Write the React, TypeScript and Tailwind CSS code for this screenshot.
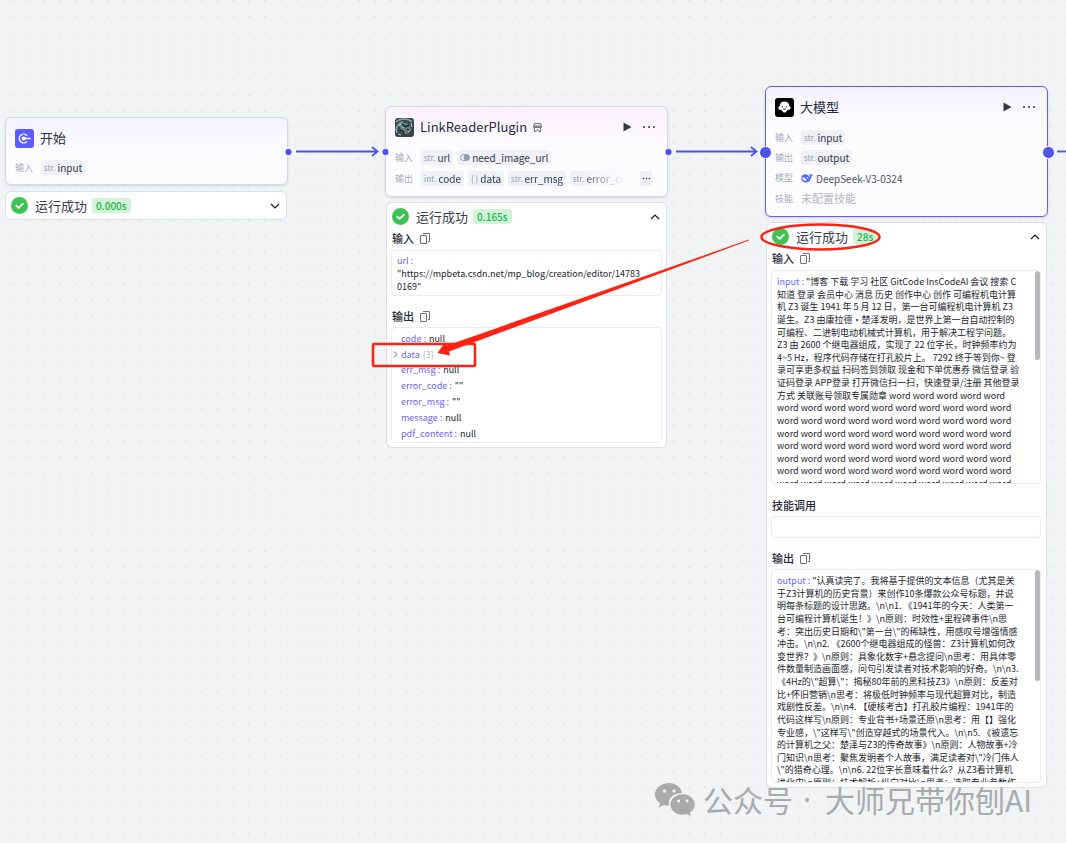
import React from "react";

const FONT = "font-['Noto_Sans_CJK_SC',sans-serif]";

const INPUT_LINES = [
  "\"博客 下载 学习 社区 GitCode InsCodeAI 会议 搜索 C",
  "知道 登录 会员中心 消息 历史 创作中心 创作 可编程机电计算",
  "机 Z3 诞生 1941 年 5 月 12 日，第一台可编程机电计算机 Z3",
  "诞生。Z3 由康拉德・楚泽发明，是世界上第一台自动控制的",
  "可编程、二进制电动机械式计算机，用于解决工程学问题。",
  "Z3 由 2600 个继电器组成，实现了 22 位字长，时钟频率约为",
  "4~5 Hz，程序代码存储在打孔胶片上。 7292 终于等到你~ 登",
  "录可享更多权益 扫码签到领取 现金和下单优惠券 微信登录 验",
  "证码登录 APP登录 打开微信扫一扫，快速登录/注册 其他登录",
  "方式 关联账号领取专属勋章 word word word word word",
  ...Array.from({ length: 7 }, () => Array(10).fill("word").join(" ")),
];

const OUTPUT_LINES = [
  "\"认真读完了。我将基于提供的文本信息（尤其是关",
  "于Z3计算机的历史背景）来创作10条爆款公众号标题，并说",
  "明每条标题的设计思路。\\n\\n1. 《1941年的今天：人类第一",
  "台可编程计算机诞生！》\\n原则：时效性+里程碑事件\\n思",
  "考：突出历史日期和\\\"第一台\\\"的稀缺性，用感叹号增强情感",
  "冲击。\\n\\n2. 《2600个继电器组成的怪兽：Z3计算机如何改",
  "变世界？》\\n原则：具象化数字+悬念提问\\n思考：用具体零",
  "件数量制造画面感，问句引发读者对技术影响的好奇。\\n\\n3.",
  "《4Hz的\\\"超算\\\"：揭秘80年前的黑科技Z3》\\n原则：反差对",
  "比+怀旧营销\\n思考：将极低时钟频率与现代超算对比，制造",
  "戏剧性反差。\\n\\n4. 【硬核考古】打孔胶片编程：1941年的",
  "代码这样写\\n原则：专业背书+场景还原\\n思考：用【】强化",
  "专业感，\\\"这样写\\\"创造穿越式的场景代入。\\n\\n5. 《被遗忘",
  "的计算机之父：楚泽与Z3的传奇故事》\\n原则：人物故事+冷",
  "门知识\\n思考：聚焦发明者个人故事，满足读者对\\\"冷门伟人",
  "\\\"的猎奇心理。\\n\\n6. 22位字长意味着什么？从Z3看计算机",
  "进化史\\n原则：技术解析+纵向对比\\n思考：选取专业参数作",
];

const PLUGIN_OUTPUT: { name: string; value: string; count?: boolean }[] = [
  { name: "code", value: "null" },
  { name: "data", value: "{3}", count: true },
  { name: "err_msg", value: "null" },
  { name: "error_code", value: "\"\"" },
  { name: "error_msg", value: "\"\"" },
  { name: "message", value: "null" },
  { name: "pdf_content", value: "null" },
];

function Chip({ type, name }: { type: React.ReactNode; name: string }) {
  return (
    <span className="flex h-[15px] shrink-0 items-center gap-0.5 rounded-[3px] bg-[#f0f0f8] px-[3px] text-[10px] text-[#33374a]">
      <span className="text-[8px] text-[#9498b0]">{type}</span>
      {name}
    </span>
  );
}

function Row({ label, children }: { label: string; children: React.ReactNode }) {
  return (
    <div className="flex items-center gap-[7px]">
      <span className="w-[19px] shrink-0 whitespace-nowrap text-[9px] text-[#a9acc2]">{label}</span>
      {children}
    </div>
  );
}

function CopyButton() {
  return (
    <button type="button" aria-label="复制" className="text-[#6b6f7e]">
      <svg width="10" height="11" viewBox="0 0 10 11" fill="none" stroke="currentColor">
        <rect x="0.5" y="2.5" width="6" height="8" rx="0.5" />
        <path d="M3 0.5h6.5v8H8" />
      </svg>
    </button>
  );
}

function SectionTitle({ title, copy = true }: { title: string; copy?: boolean }) {
  return (
    <div className="flex h-4 items-center gap-1.5 pl-px">
      <h3 className="text-[11px] font-medium text-[#22263a]">{title}</h3>
      {copy && <CopyButton />}
    </div>
  );
}

function RunStatus({ time, open }: { time: string; open: boolean }) {
  return (
    <div className="flex h-[27px] items-center pl-[5px] pr-1.5">
      <svg width="17" height="17" viewBox="0 0 17 17" fill="none">
        <circle cx="8.5" cy="8.5" r="8.5" fill="#3ec254" />
        <path d="M5.2 8.6l2.4 2.3 4.3-4.3" stroke="#fff" strokeWidth="1.7" strokeLinecap="round" strokeLinejoin="round" />
      </svg>
      <span className="ml-[7px] text-[13px] text-[#383c4f]">运行成功</span>
      <span className="ml-[5px] flex h-[15px] items-center rounded-[3px] bg-[#d2f3d9] px-1 text-[10px] font-medium text-[#1db446]">
        {time}
      </span>
      <button type="button" aria-label={open ? "收起" : "展开"} className="ml-auto text-[#15171f]">
        <svg width="10" height="8" viewBox="0 0 10 8" fill="none" stroke="currentColor" strokeWidth="1.2">
          <path d={open ? "M1 6l4-4 4 4" : "M1 2l4 4 4-4"} />
        </svg>
      </button>
    </div>
  );
}

function NodeActions() {
  return (
    <div className="ml-auto flex items-center gap-2.5 pr-0.5">
      <button type="button" aria-label="运行" className="text-[#33374a]">
        <svg width="9" height="10" viewBox="0 0 9 10" fill="currentColor">
          <path d="M0.5 0.5L8.5 5L0.5 9.5Z" />
        </svg>
      </button>
      <button type="button" aria-label="更多" className="text-[#33374a]">
        <svg width="14" height="4" viewBox="0 0 14 4" fill="currentColor">
          <circle cx="2" cy="2" r="1" />
          <circle cx="7" cy="2" r="1" />
          <circle cx="12" cy="2" r="1" />
        </svg>
      </button>
    </div>
  );
}

function LogView({ name, lines }: { name: string; lines: string[] }) {
  return (
    <div className="flex h-[214px] justify-between overflow-hidden rounded border border-[#ebebf3] pl-[5px]">
      <div className="flex h-[219px] flex-col justify-between pt-[5px] text-[9px] text-[#22252f]">
        {lines.map((line, i) => (
          <p key={i} className="h-3 whitespace-pre leading-3">
            {i === 0 && <span className="text-[#6b63ff]">{name} : </span>}
            {line}
          </p>
        ))}
      </div>
      <div
        className={`w-[5px] shrink-0 rounded-full bg-[#b8b8bb] ${name === "input" ? "h-[89px]" : "h-[111px]"}`}
      />
    </div>
  );
}

function StartNode() {
  return (
    <article className="absolute left-[5px] top-[117px] w-[283px]">
      <div className="h-[68px] rounded-md border border-[#d5d7e6] bg-gradient-to-b from-[#f3f2ff] to-[#fcfcff] to-50% px-[9px] pt-[10px] shadow-sm">
        <header className="flex h-5 items-center gap-1.5">
          <svg width="19" height="19" viewBox="0 0 19 19" fill="none">
            <rect width="19" height="19" rx="3" fill="#5b5cff" />
            <path d="M11.6 6.2A4.4 4.4 0 1 0 11.6 12.8" stroke="#fff" strokeWidth="1.4" strokeLinecap="round" />
            <circle cx="8.6" cy="9.5" r="2" fill="#fff" />
            <path d="M8.6 9.5H15" stroke="#fff" strokeWidth="1.5" strokeLinecap="round" />
          </svg>
          <h2 className="text-[13px] text-[#262a3c]">开始</h2>
        </header>
        <div className="mt-3">
          <Row label="输入">
            <Chip type="str." name="input" />
          </Row>
        </div>
      </div>
      <div className="mr-px mt-1.5 rounded-md border border-[#dcdee8] bg-white">
        <RunStatus time="0.000s" open={false} />
      </div>
    </article>
  );
}

function PluginNode() {
  return (
    <article className="absolute left-[385px] top-[106px] w-[283px]">
      <div className="h-[91px] rounded-md border border-[#d5d7e6] bg-gradient-to-b from-[#fbf0ff] to-[#fcfcff] to-45% px-[9px] pt-[10px] shadow-sm">
        <header className="flex h-5 items-center gap-1.5">
          <svg width="19" height="19" viewBox="0 0 19 19" fill="none">
            <rect width="19" height="19" rx="3" fill="#34464f" />
            <path d="M1 4C5 0 13 0 17 4M2 15C0 10 3 5 8 4" stroke="#8ea3a6" strokeWidth="1.6" />
            <path d="M5 7c3-3 8-3 10 1s0 8-4 8-7-4-6-9z" fill="#5d8580" />
            <path d="M7 6l3 3 4-2M5 12l3 1 1 3M12 11l3 2" stroke="#14222c" strokeWidth="1.4" />
            <path d="M10 10l2 3-2 3M14 8l1 3" stroke="#b75348" strokeWidth="1" />
            <path d="M4 8l2-2M7 9l2 1M13 14l2-2M3 16l3 1M16 5l1 4" stroke="#c8dad4" strokeWidth="1" />
          </svg>
          <h2 className="text-[13px] text-[#262a3c]">LinkReaderPlugin</h2>
          <svg width="9" height="9" viewBox="0 0 9 9" fill="none" stroke="#555a6b" strokeWidth="0.9">
            <path d="M1.5 .6h6L8.4 3.2v1.2H.6V3.2zM.6 3h7.8M3.2 3v1.4M5.8 3v1.4M1.4 4.4v4h1.8l1.3-2 1.3 2h1.8v-4" />
          </svg>
          <NodeActions />
        </header>
        <div className="mt-[13px] flex flex-col gap-1.5">
          <Row label="输入">
            <div className="flex gap-1">
              <Chip type="str." name="url" />
              <Chip
                type={
                  <svg width="10" height="7" viewBox="0 0 10 7" fill="none" stroke="#9297b2">
                    <rect x="0.5" y="0.5" width="9" height="6" rx="3" />
                    <circle cx="6.5" cy="3.5" r="2.5" fill="#9297b2" />
                  </svg>
                }
                name="need_image_url"
              />
            </div>
          </Row>
          <Row label="输出">
            <div className="flex w-[208px] gap-1 overflow-hidden [mask-image:linear-gradient(to_right,black_76%,transparent_98%)]">
              <Chip type="int." name="code" />
              <Chip type="{ }" name="data" />
              <Chip type="str." name="err_msg" />
              <Chip type="str." name="error_code" />
            </div>
            <button
              type="button"
              aria-label="更多输出"
              className="ml-1 flex h-[15px] w-3 items-center justify-center rounded-[3px] bg-[#eeeef7]"
            >
              <svg width="9" height="3" viewBox="0 0 9 3" fill="#33374a">
                <circle cx="1.5" cy="1.5" r="0.8" />
                <circle cx="4.5" cy="1.5" r="0.8" />
                <circle cx="7.5" cy="1.5" r="0.8" />
              </svg>
            </button>
          </Row>
        </div>
      </div>
      <div className="mx-px mt-[5px] rounded-md border border-[#dcdee8] bg-white pb-1">
        <RunStatus time="0.165s" open />
        <div className="px-1">
          <SectionTitle title="输入" />
          <div className="mt-1 h-[46px] rounded border border-[#ebebf3] px-[5px] pt-[3px] text-[9px] leading-[13px] text-[#22252f]">
            <p className="text-[#6b63ff]">url :</p>
            <p className="whitespace-nowrap">
              "https://mpbeta.csdn.net/mp_blog/creation/editor/14783
              <br />
              0169"
            </p>
          </div>
          <div className="mt-3">
            <SectionTitle title="输出" />
          </div>
          <ul className="mt-[3px] flex h-[116px] flex-col justify-between rounded border border-[#ebebf3] pb-px pl-px pt-[3px] text-[9px] text-[#22252f]">
            {PLUGIN_OUTPUT.map(({ name, value, count }) => (
              <li key={name} className="flex h-[15px] items-center">
                <span className="w-2 shrink-0">
                  {count && (
                    <svg width="5" height="7" viewBox="0 0 5 7" fill="none" stroke="#555a6b">
                      <path d="M1 .5l3 3-3 3" />
                    </svg>
                  )}
                </span>
                <span className="text-[#6b63ff]">{count ? name : `${name} :`}</span>
                <span className={count ? "ml-[3px] text-[#b5b7c4]" : "ml-[3px]"}>{value}</span>
              </li>
            ))}
          </ul>
        </div>
      </div>
    </article>
  );
}

function ModelNode() {
  return (
    <article className="absolute left-[765px] top-[86px] w-[283px]">
      <div className="h-[131px] rounded-md border border-[#635bff] bg-gradient-to-b from-[#f3f2ff] to-[#fcfcff] to-30% px-[9px] pt-[10px] shadow-sm">
        <header className="flex h-5 items-center gap-1.5">
          <svg width="19" height="19" viewBox="0 0 19 19">
            <rect width="19" height="19" rx="3" fill="#000" />
            <path
              d="M9.5 3.5c3 0 4.8 1.9 4.8 4.4 1.4.8 1.9 2.3.7 3.3-.8.7-1.6.6-2.2.3-.3 1-1 1.600-1.600 1.900-.3 1.300-3.100 1.300-3.400 0-.6-.3-1.300-.9-1.600-1.900-.6.3-1.400.4-2.200-.3-1.200-1-.7-2.500.7-3.300 0-2.500 1.800-4.400 4.800-4.400z"
              fill="#fff"
            />
            <path d="M7.5 8.3v1M11.5 8.3v1M8.2 10.8c.8.7 1.8.7 2.6 0" stroke="#000" strokeWidth="0.9" fill="none" />
          </svg>
          <h2 className="text-[13px] text-[#262a3c]">大模型</h2>
          <NodeActions />
        </header>
        <div className="mt-[13px] flex flex-col gap-[5px]">
          <Row label="输入">
            <Chip type="str." name="input" />
          </Row>
          <Row label="输出">
            <Chip type="str." name="output" />
          </Row>
          <Row label="模型">
            <span className="flex h-4 items-center gap-[3px] text-[10px] text-[#4b5064]">
              <svg width="12" height="10" viewBox="0 0 24 20" fill="#4d6bfe">
                <path d="M23.5 2.5c-.3-.2-.8.3-1.3.6-1.2.9-2.5.6-3.500.3-.8-.4-1.300-1.300-1.800-2.400-.3-.3-.7.1-.7.5 0 1.800.9 3.300 2.200 4.200-.2 1-.8 1.500-1.300 2.200C15.500 5.500 13 3.500 10.500 3 9 2.600 8 1.700 7 2c-.5.2-.2.7.3 1.200C3.500 3.300.5 6 .5 10.500c0 5 4 8.500 9 8.500 2.400 0 4.300-.7 5.800-1.900 1 .4 2.700.3 2.800-.2 0-.4-.8-.7-1.200-1.200 2.600-2.700 3.400-6 3.800-8.400 1.900-.5 3.100-2.600 2.800-4.800z" />
                <path d="M3 8c3 .3 6 3 8.500 6.500-2.500 2.200-7.300.5-8.300-3.200C2.900 10.200 2.800 9 3 8zM11 9c1.500-1 3.500 0 4 2.500-1.500 0-3-.5-4-2.500z" fill="#fcfcff" />
              </svg>
              DeepSeek-V3-0324
            </span>
          </Row>
          <Row label="技能">
            <span className="flex h-[15px] items-center text-[11px] text-[#b4b5be]">未配置技能</span>
          </Row>
        </div>
      </div>
      <div className="mx-px mt-[5px] rounded-md border border-[#dcdee8] bg-white pb-1">
        <RunStatus time="28s" open />
        <div className="pl-1 pr-[5px]">
          <SectionTitle title="输入" />
          <div className="mt-1">
            <LogView name="input" lines={INPUT_LINES} />
          </div>
          <div className="mt-[13px]">
            <SectionTitle title="技能调用" copy={false} />
          </div>
          <div className="mt-[3px] h-[22px] rounded border border-[#ebebf3]" />
          <div className="mt-3">
            <SectionTitle title="输出" />
          </div>
          <div className="mt-[3px]">
            <LogView name="output" lines={OUTPUT_LINES} />
          </div>
        </div>
      </div>
    </article>
  );
}

// Edges and ports between the nodes
function Connections() {
  return (
    <svg className="absolute left-0 top-0" width="1066" height="843" viewBox="0 0 1066 843" fill="none">
      <g stroke="#4d53e8" strokeWidth="1.8">
        <path d="M296 151.5H378M372 147l5.5 4.5-5.5 4.5" />
        <path d="M676 151.5H757M751 147l5.5 4.5-5.5 4.5" />
        <path d="M1057 151.5H1066" />
      </g>
      <g fill="#4d53e8" stroke="#fff" strokeWidth="1">
        <circle cx="288.5" cy="152" r="3.7" />
        <circle cx="385.5" cy="152" r="3.7" />
        <circle cx="668.5" cy="152" r="3.7" />
        <circle cx="765.5" cy="152.5" r="6" />
        <circle cx="1048.5" cy="152.5" r="6" />
      </g>
    </svg>
  );
}

// Red marks drawn over the flow
function Annotations() {
  return (
    <svg className="pointer-events-none absolute left-0 top-0" width="1066" height="843" viewBox="0 0 1066 843" fill="none">
      <rect x="373" y="344" width="102" height="22" rx="1" stroke="#ff2112" strokeWidth="2.5" />
      <path d="M749 239.6L447 345.5L443.5 344.5L437.5 353L450 355.5L449 351.5L749 240.6Z" fill="#ff2112" />
      <ellipse cx="820.5" cy="237" rx="59" ry="12.5" stroke="#ff2112" strokeWidth="2.5" />
    </svg>
  );
}

function Watermark() {
  return (
    <div className="absolute left-[654px] top-[779px] flex h-10 items-center whitespace-nowrap text-[#a9aaac]">
      <svg className="mr-2" width="41" height="36" viewBox="0 0 41 36" fill="currentColor">
        <path d="M15 2C7.5 2 1 7 1 13.5c0 3.5 2 6.5 5 8.5L4.700 26.500l5-2.600c1.600.5 3.200.7 5.300.7-1.500-7.200 4.500-12.600 13.200-12.600C27 6.200 21.500 2 15 2z" />
        <path d="M28.8 13.3C22 13.3 16.5 17.700 16.500 23.500s5.500 10.200 12.300 10.200c1.400 0 2.800-.2 4-.6l4 2.100-1-3.500c3-1.900 5-4.800 5-8.200 0-5.800-5.400-10.200-12-10.200z" />
        <g fill="#f1f2f5">
          <circle cx="10.5" cy="10" r="1.7" />
          <circle cx="20" cy="10" r="1.7" />
          <circle cx="24.7" cy="20" r="1.5" />
          <circle cx="33" cy="20" r="1.5" />
        </g>
      </svg>
      <p className="flex items-center text-[30px] font-normal">
        公众号
        <span className="w-8 pl-2.5 font-['Noto_Sans']">·</span>
        大师兄带你刨AI
      </p>
    </div>
  );
}

export default function App() {
  return (
    <main className={`relative h-screen w-full overflow-hidden bg-[#f2f3f5] ${FONT}`}>
      <svg className="absolute inset-0 h-full w-full">
        <defs>
          <pattern id="dots" x="5.5" y="103.2" width="15.72" height="15.72" patternUnits="userSpaceOnUse">
            <circle cx="7.8" cy="7.8" r="0.9" fill="#dfe1e7" />
          </pattern>
        </defs>
        <rect width="100%" height="100%" fill="url(#dots)" />
      </svg>
      <StartNode />
      <PluginNode />
      <ModelNode />
      <Connections />
      <Annotations />
      <Watermark />
    </main>
  );
}
